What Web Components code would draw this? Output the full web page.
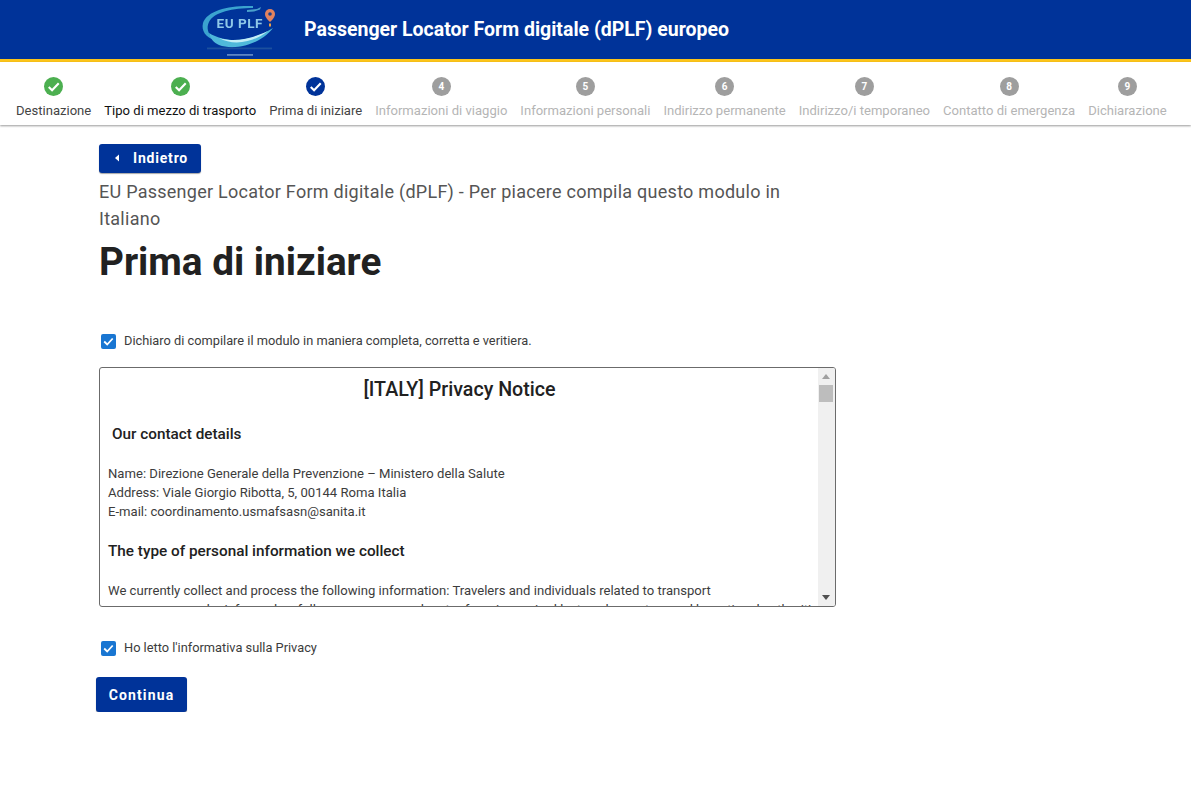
<!DOCTYPE html>
<html lang="it">
<head>
<meta charset="utf-8">
<title>dPLF</title>
<style>
  html, body { margin: 0; background: #fff; }
  body { font-family: Roboto, "Liberation Sans", sans-serif; color: #212121; }
</style>
</head>
<body>

<plf-header>Passenger Locator Form digitale (dPLF) europeo</plf-header>

<plf-stepper>
  <plf-step state="done">Destinazione</plf-step>
  <plf-step state="done" strong>Tipo di mezzo di trasporto</plf-step>
  <plf-step state="current">Prima di iniziare</plf-step>
  <plf-step n="4">Informazioni di viaggio</plf-step>
  <plf-step n="5">Informazioni personali</plf-step>
  <plf-step n="6">Indirizzo permanente</plf-step>
  <plf-step n="7">Indirizzo/i temporaneo</plf-step>
  <plf-step n="8">Contatto di emergenza</plf-step>
  <plf-step n="9">Dichiarazione</plf-step>
</plf-stepper>

<plf-page>
  <plf-button back>Indietro</plf-button>
  <plf-intro title-text="Prima di iniziare">EU Passenger Locator Form digitale (dPLF) - Per piacere compila questo modulo in Italiano</plf-intro>
  <plf-check style="margin-top:45px">Dichiaro di compilare il modulo in maniera completa, corretta e veritiera.</plf-check>
  <plf-notice>
    <h2>[ITALY] Privacy Notice</h2>
    <h3 style="padding-left:4px">Our contact details</h3>
    <p>Name: Direzione Generale della Prevenzione – Ministero della Salute<br>
    Address: Viale Giorgio Ribotta, 5, 00144 Roma Italia<br>
    E-mail: coordinamento.usmafsasn@sanita.it</p>
    <h3 style="margin-top:20px">The type of personal information we collect</h3>
    <p>We currently collect and process the following information: Travelers and individuals related to transport<br>
    passengers may be informed as follows: a passenger locator form is required by travel operators and by national authorities</p>
  </plf-notice>
  <plf-check style="margin-top:32px">Ho letto l'informativa sulla Privacy</plf-check>
  <plf-button style="margin:22px 0 0 -3px">Continua</plf-button>
</plf-page>

<script>
class PlfHeader extends HTMLElement {
  constructor() {
    super();
    this.attachShadow({mode:'open'}).innerHTML = `
    <style>
      :host { display: flex; align-items: center; height: 59px; background: #003399; border-bottom: 3px solid #fcc419; padding-left: 201px; }
      svg { width: 78px; height: 59px; flex: none; }
      .title { margin-left: 25px; color: #fff; font-size: 19.500px; font-weight: 700; }
    </style>
    <svg viewBox="0 0 78 59">
      <g filter="url(#soft)">
        <path d="M52 6 C30 5 6 10 2 23 C0 31 5 37 13 40 C7 34 5 28 8 22 C13 12 32 8 52 8 Z" fill="#3aa3cf"/>
        <path d="M8 33 C26 44 50 42 72 28 C60 44 34 51 18 45 C13 43 9 38 8 33 Z" fill="#4fb8da"/>
        <path d="M18 38 C34 43 52 38 67 31 C52 43 32 46 18 38 Z" fill="#c4eef6"/>
        <path d="M46 10 l10 -1 l4 -2 l-1 2.500 l-6 2 l-7 0.500 Z" fill="#4aa0cc"/>
        <text x="15.500" y="28" font-family="Roboto, sans-serif" font-size="13.500" font-weight="700" fill="#8fc8e8" textLength="46">EU PLF</text>
        <path d="M69 9 a5 5 0 0 1 5 5 c0 4 -5 8 -5 8 s-5 -4 -5 -8 a5 5 0 0 1 5 -5 Z" fill="#e0825f"/>
        <circle cx="69" cy="14" r="1.800" fill="#17408f"/>
        <rect x="68" y="23.500" width="2" height="3" fill="#e8a04a"/>
        <rect x="6" y="47.500" width="65" height="1.800" fill="#1c4f9e"/>
        <rect x="26" y="54" width="26" height="1.800" fill="#5d86c4"/>
      </g>
      <defs><filter id="soft" x="-5%" y="-5%" width="110%" height="110%"><feGaussianBlur stdDeviation="0.350"/></filter></defs>
    </svg>
    <div class="title"><slot></slot></div>`;
  }
}
customElements.define('plf-header', PlfHeader);

class PlfStepper extends HTMLElement {
  constructor() {
    super();
    this.attachShadow({mode:'open'}).innerHTML = `
    <style>
      :host { display: flex; gap: 13px; height: 63px; padding: 0 16px; background: #fff; box-shadow: 0 1px 2px rgba(0,0,0,.4); box-sizing: border-box; position: relative; }
    </style>
    <slot></slot>`;
  }
}
customElements.define('plf-stepper', PlfStepper);

class PlfStep extends HTMLElement {
  constructor() {
    super();
    const state = this.getAttribute('state');
    const n = this.getAttribute('n');
    const check = '<svg viewBox="0 0 20 20"><path d="M5 10.500 l3.500 3.500 l7 -7.500" fill="none" stroke="#fff" stroke-width="2.200"/></svg>';
    this.attachShadow({mode:'open'}).innerHTML = `
    <style>
      :host { display: flex; flex-direction: column; align-items: center; padding-top: 15px; font-size: 13.075px; white-space: nowrap; color: #b5b5b5; }
      :host([state]) { color: #444; }
      :host([strong]) { color: #111; }
      .dot { width: 19px; height: 19px; border-radius: 50%; background: #9e9e9e; color: #fff; font-size: 10px; font-weight: 700; display: flex; align-items: center; justify-content: center; margin-bottom: 7px; }
      :host([state=done]) .dot { background: #4caf50; }
      :host([state=current]) .dot { background: #003399; }
      svg { width: 19px; height: 19px; display: block; }
    </style>
    <div class="dot">${state ? check : n}</div>
    <slot></slot>`;
  }
}
customElements.define('plf-step', PlfStep);

class PlfPage extends HTMLElement {
  constructor() {
    super();
    this.attachShadow({mode:'open'}).innerHTML = `
    <style>
      :host { display: flex; flex-direction: column; align-items: flex-start; width: 737px; margin-left: 99px; padding-top: 19px; }
    </style>
    <slot></slot>`;
  }
}
customElements.define('plf-page', PlfPage);

class PlfButton extends HTMLElement {
  constructor() {
    super();
    const back = this.hasAttribute('back');
    this.attachShadow({mode:'open'}).innerHTML = `
    <style>
      :host { display: inline-flex; align-items: center; background: #003399; color: #fff; border-radius: 3px; font-size: 14px; font-weight: 700; letter-spacing: 1.150px; box-shadow: 0 1px 1px rgba(0,0,0,.35); box-sizing: border-box; }
      :host([back]) { height: 29px; width: 102px; padding: 0 0 1px 15px; letter-spacing: .8px; }
      :host(:not([back])) { height: 35px; width: 91px; justify-content: center; }
      svg { width: 6px; height: 8px; margin-right: 13px; }
    </style>
    ${back ? '<svg viewBox="0 0 6 8"><path d="M5 0.500 L1 4 L5 7.500 Z" fill="#fff"/></svg>' : ''}
    <slot></slot>`;
  }
}
customElements.define('plf-button', PlfButton);

class PlfIntro extends HTMLElement {
  constructor() {
    super();
    this.attachShadow({mode:'open'}).innerHTML = `
    <style>
      :host { display: block; width: 700px; margin-top: 5px; }
      .lead { font-size: 18px; line-height: 27px; color: #555; letter-spacing: .26px; }
      h1 { margin: 5px 0 0; font-size: 38.700px; line-height: 50px; font-weight: 700; color: #212121; }
    </style>
    <div class="lead"><slot></slot></div>
    <h1>${this.getAttribute('title-text')}</h1>`;
  }
}
customElements.define('plf-intro', PlfIntro);

class PlfCheck extends HTMLElement {
  constructor() {
    super();
    this.attachShadow({mode:'open'}).innerHTML = `
    <style>
      :host { display: flex; align-items: center; gap: 8px; font-size: 12.800px; color: #3c3c3c; height: 16px; padding-left: 2px; }
      .box { width: 15px; height: 15px; border-radius: 2px; background: #1976d2; position: relative; top: 1px; flex: none; }
      svg { width: 15px; height: 15px; display: block; }
    </style>
    <div class="box"><svg viewBox="0 0 15 15"><path d="M3.200 7.500 l3 3 l5.500 -6" fill="none" stroke="#fff" stroke-width="1.800"/></svg></div>
    <span><slot></slot></span>`;
  }
}
customElements.define('plf-check', PlfCheck);

class PlfNotice extends HTMLElement {
  constructor() {
    super();
    this.attachShadow({mode:'open'}).innerHTML = `
    <style>
      :host { display: block; width: 737px; height: 240px; box-sizing: border-box; margin-top: 19px; border: 1px solid #6b6b6b; border-radius: 3px; overflow: hidden; position: relative; }
      .body { height: 238px; overflow: hidden; padding: 0 24px 0 8px; font-size: 13.100px; color: #3c3c3c; line-height: 19px; white-space: nowrap; }
      ::slotted(h2) { margin: 0; padding-top: 9px; text-align: center; font-size: 19.650px; line-height: 26px; font-weight: 500; color: #212121; }
      ::slotted(h3) { margin: 21px 0 0; font-size: 15.300px; line-height: 20px; font-weight: 500; color: #212121; }
      ::slotted(p) { margin: 20px 0 0; }
      .bar { position: absolute; top: 0; right: 0; width: 17px; height: 100%; background: #f0f0f0; }
      .thumb { position: absolute; top: 17px; left: 1px; width: 14px; height: 17px; background: #bdbdbd; }
      .up, .down { position: absolute; left: 4px; width: 0; height: 0; border-left: 4px solid transparent; border-right: 4px solid transparent; }
      .up { top: 6px; border-bottom: 5px solid #a0a0a0; }
      .down { bottom: 6px; border-top: 5px solid #505050; }
    </style>
    <div class="body"><slot></slot></div>
    <div class="bar"><div class="up"></div><div class="thumb"></div><div class="down"></div></div>`;
  }
}
customElements.define('plf-notice', PlfNotice);
</script>
</body>
</html>
